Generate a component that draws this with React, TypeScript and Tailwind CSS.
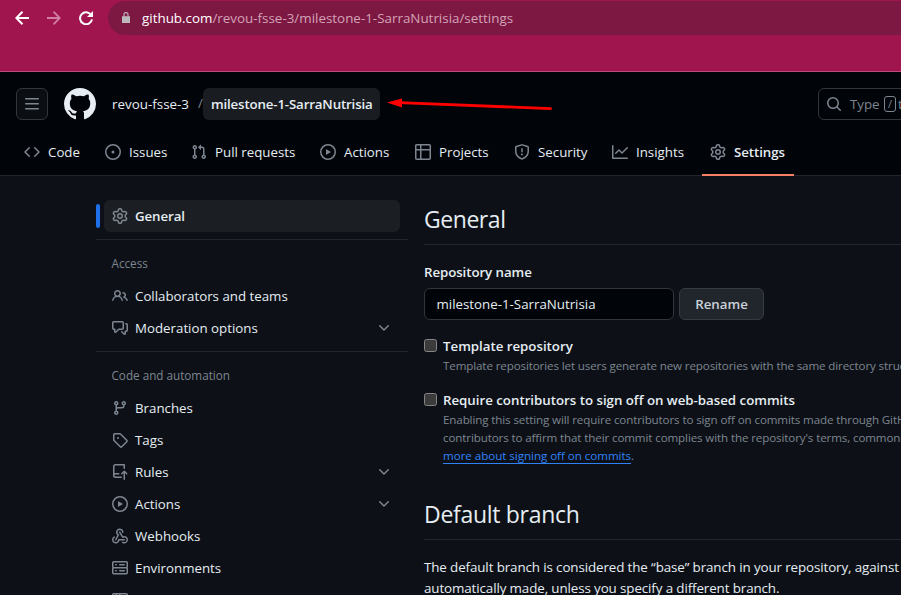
import React from "react";

const paths = {
  bars: "M1 2.75A.75.75 0 0 1 1.75 2h12.5a.75.75 0 0 1 0 1.5H1.75A.75.75 0 0 1 1 2.75Zm0 5A.75.75 0 0 1 1.75 7h12.5a.75.75 0 0 1 0 1.5H1.75A.75.75 0 0 1 1 7.75ZM1.75 12h12.5a.75.75 0 0 1 0 1.5H1.75a.75.75 0 0 1 0-1.5Z",
  github:
    "M8 0c4.42 0 8 3.58 8 8a8.013 8.013 0 0 1-5.45 7.59c-.4.08-.55-.17-.55-.38 0-.27.01-1.13.01-2.2 0-.75-.25-1.23-.54-1.48 1.78-.2 3.65-.88 3.65-3.95 0-.88-.31-1.59-.82-2.15.08-.2.36-1.02-.08-2.12 0 0-.67-.22-2.2.82-.64-.18-1.32-.27-2-.27-.68 0-1.36.09-2 .27-1.53-1.03-2.2-.82-2.2-.82-.44 1.1-.16 1.92-.08 2.12-.51.56-.82 1.28-.82 2.15 0 3.06 1.86 3.75 3.64 3.95-.23.2-.44.55-.51 1.07-.46.21-1.61.55-2.33-.66-.15-.24-.6-.83-1.23-.82-.67.01-.27.38.01.53.34.19.73.9.82 1.13.16.45.68 1.31 2.69.94 0 .67.01 1.3.01 1.49 0 .21-.15.45-.55.38A7.995 7.995 0 0 1 0 8c0-4.42 3.58-8 8-8Z",
  code: "m11.28 3.22 4.25 4.25a.75.75 0 0 1 0 1.06l-4.25 4.25a.749.749 0 0 1-1.275-.326.749.749 0 0 1 .215-.734L13.94 8l-3.72-3.72a.749.749 0 0 1 .326-1.275.749.749 0 0 1 .734.215Zm-6.56 0a.751.751 0 0 1 1.042.018.751.751 0 0 1 .018 1.042L2.06 8l3.72 3.72a.749.749 0 0 1-.326 1.275.749.749 0 0 1-.734-.215L.47 8.53a.75.75 0 0 1 0-1.06Z",
  issue: "M8 9.5a1.5 1.5 0 1 0 0-3 1.5 1.5 0 0 0 0 3Z M8 0a8 8 0 1 1 0 16A8 8 0 0 1 8 0ZM1.5 8a6.5 6.5 0 1 0 13 0 6.5 6.5 0 0 0-13 0Z",
  pull: "M1.5 3.25a2.25 2.25 0 1 1 3 2.122v5.256a2.251 2.251 0 1 1-1.5 0V5.372A2.25 2.25 0 0 1 1.5 3.25Zm5.677-.177L9.573.677A.25.25 0 0 1 10 .854V2.5h1A2.5 2.5 0 0 1 13.5 5v5.628a2.251 2.251 0 1 1-1.5 0V5a1 1 0 0 0-1-1h-1v1.646a.25.25 0 0 1-.427.177L7.177 3.427a.25.25 0 0 1 0-.354ZM3.75 2.5a.75.75 0 1 0 0 1.5.75.75 0 0 0 0-1.5Zm0 9.5a.75.75 0 1 0 0 1.5.75.75 0 0 0 0-1.5Zm8.25.75a.75.75 0 1 0 1.5 0 .75.75 0 0 0-1.5 0Z",
  play: "M8 0a8 8 0 1 1 0 16A8 8 0 0 1 8 0ZM1.5 8a6.5 6.5 0 1 0 13 0 6.5 6.5 0 0 0-13 0Zm4.879-2.773 4.264 2.559a.25.25 0 0 1 0 .428l-4.264 2.559A.25.25 0 0 1 6 10.559V5.442a.25.25 0 0 1 .379-.215Z",
  table:
    "M0 1.75C0 .784.784 0 1.75 0h12.5C15.216 0 16 .784 16 1.75v12.5A1.75 1.75 0 0 1 14.25 16H1.75A1.75 1.75 0 0 1 0 14.25ZM6.5 6.5v8h7.75a.25.25 0 0 0 .25-.25V6.5Zm8-1.5V1.75a.25.25 0 0 0-.25-.25H6.5V5Zm-13 1.5v7.75c0 .138.112.25.25.25H5v-8ZM5 5V1.5H1.75a.25.25 0 0 0-.25.25V5Z",
  shield:
    "M7.467.133a1.748 1.748 0 0 1 1.066 0l5.25 1.68A1.75 1.75 0 0 1 15 3.48V7c0 1.566-.32 3.182-1.303 4.682-.983 1.498-2.585 2.813-5.032 3.855a1.697 1.697 0 0 1-1.33 0c-2.447-1.042-4.049-2.357-5.032-3.855C1.32 10.182 1 8.566 1 7V3.48a1.75 1.75 0 0 1 1.217-1.667Zm.61 1.429a.25.25 0 0 0-.153 0l-5.25 1.68a.25.25 0 0 0-.174.238V7c0 1.358.275 2.666 1.057 3.86.784 1.194 2.121 2.34 4.366 3.297a.196.196 0 0 0 .154 0c2.245-.956 3.582-2.104 4.366-3.298C13.225 9.666 13.5 8.36 13.5 7V3.48a.251.251 0 0 0-.174-.237l-5.25-1.68ZM8.75 4.75v3a.75.75 0 0 1-1.5 0v-3a.75.75 0 0 1 1.5 0ZM9 10.5a1 1 0 1 1-2 0 1 1 0 0 1 2 0Z",
  graph:
    "M1.5 1.75V13.5h13.75a.75.75 0 0 1 0 1.5H.75a.75.75 0 0 1-.75-.75V1.75a.75.75 0 0 1 1.5 0Zm14.28 2.53-5.25 5.25a.75.75 0 0 1-1.06 0L7 7.06 4.28 9.78a.751.751 0 0 1-1.042-.018.751.751 0 0 1-.018-1.042l3.25-3.25a.75.75 0 0 1 1.06 0L10 7.94l4.72-4.72a.751.751 0 0 1 1.042.018.751.751 0 0 1 .018 1.042Z",
  gear: "M8 0a8.2 8.2 0 0 1 .701.031C9.444.095 9.99.645 10.16 1.29l.288 1.107c.018.066.079.158.212.224.231.114.454.243.668.386.123.082.233.09.299.071l1.103-.303c.644-.176 1.392.021 1.82.63.27.385.506.792.704 1.218.315.675.111 1.422-.364 1.891l-.814.806c-.049.048-.098.147-.088.294.016.257.016.515 0 .772-.01.147.038.246.088.294l.814.806c.475.469.679 1.216.364 1.891a7.977 7.977 0 0 1-.704 1.217c-.428.61-1.176.807-1.82.63l-1.102-.302c-.067-.019-.177-.011-.3.071a5.909 5.909 0 0 1-.668.386c-.133.066-.194.158-.211.224l-.29 1.106c-.168.646-.715 1.196-1.458 1.26a8.006 8.006 0 0 1-1.402 0c-.743-.064-1.289-.614-1.458-1.26l-.289-1.106c-.018-.066-.079-.158-.212-.224a5.738 5.738 0 0 1-.668-.386c-.123-.082-.233-.09-.299-.071l-1.103.303c-.644.176-1.392-.021-1.82-.63a8.12 8.12 0 0 1-.704-1.218c-.315-.675-.111-1.422.363-1.891l.815-.806c.05-.048.098-.147.088-.294a6.214 6.214 0 0 1 0-.772c.01-.147-.038-.246-.088-.294l-.815-.806C.635 6.045.431 5.298.746 4.623a7.92 7.92 0 0 1 .704-1.217c.428-.61 1.176-.807 1.82-.63l1.102.302c.067.019.177.011.3-.071.214-.143.437-.272.668-.386.133-.066.194-.158.211-.224l.29-1.106C6.009.645 6.556.095 7.299.03 7.53.01 7.764 0 8 0Zm-.571 1.525c-.036.003-.108.036-.137.146l-.289 1.105c-.147.561-.549.967-.998 1.189-.173.086-.34.183-.5.29-.417.278-.97.423-1.529.27l-1.103-.303c-.109-.03-.175.016-.195.045-.22.312-.412.644-.573.99-.014.031-.021.11.059.19l.815.806c.411.406.562.957.53 1.456a4.709 4.709 0 0 0 0 .582c.032.499-.119 1.05-.53 1.456l-.815.806c-.081.08-.073.159-.059.19.162.346.353.677.573.989.02.03.085.076.195.046l1.102-.303c.56-.153 1.113-.008 1.53.27.161.107.328.204.501.29.447.222.85.629.997 1.189l.289 1.105c.029.109.101.143.137.146a6.6 6.6 0 0 0 1.142 0c.036-.003.108-.036.137-.146l.289-1.105c.147-.561.549-.967.998-1.189.173-.086.34-.183.5-.29.417-.278.97-.423 1.529-.27l1.103.303c.109.029.175-.016.195-.045.22-.313.411-.644.573-.99.014-.031.021-.11-.059-.19l-.815-.806c-.411-.406-.562-.957-.53-1.456a4.709 4.709 0 0 0 0-.582c-.032-.499.119-1.05.53-1.456l.815-.806c.081-.08.073-.159.059-.19a6.464 6.464 0 0 0-.573-.989c-.02-.03-.085-.076-.195-.046l-1.102.303c-.56.153-1.113.008-1.53-.27a4.44 4.44 0 0 0-.501-.29c-.447-.222-.85-.629-.997-1.189l-.289-1.105c-.029-.11-.101-.143-.137-.146a6.6 6.6 0 0 0-1.142 0ZM11 8a3 3 0 1 1-6 0 3 3 0 0 1 6 0ZM9.5 8a1.5 1.5 0 1 0-3.001.001A1.5 1.5 0 0 0 9.5 8Z",
  search:
    "M10.68 11.74a6 6 0 0 1-7.922-8.982 6 6 0 0 1 8.982 7.922l3.04 3.04a.749.749 0 0 1-.326 1.275.749.749 0 0 1-.734-.215ZM11.5 7a4.499 4.499 0 1 0-8.997 0A4.499 4.499 0 0 0 11.5 7Z",
  people:
    "M2 5.5a3.5 3.5 0 1 1 5.898 2.549 5.508 5.508 0 0 1 3.034 4.084.75.75 0 1 1-1.482.235 4 4 0 0 0-7.9 0 .75.75 0 0 1-1.482-.236A5.507 5.507 0 0 1 3.102 8.05 3.493 3.493 0 0 1 2 5.5ZM11 4a3.001 3.001 0 0 1 2.22 5.018 5.01 5.01 0 0 1 2.56 3.012.749.749 0 0 1-.885.954.752.752 0 0 1-.549-.514 3.507 3.507 0 0 0-2.522-2.372.75.75 0 0 1-.574-.73v-.352a.75.75 0 0 1 .416-.672A1.5 1.5 0 0 0 11 5.5.75.75 0 0 1 11 4Zm-5.5-.5a2 2 0 1 0-.001 3.999A2 2 0 0 0 5.5 3.5Z",
  discussion:
    "M1.75 1h8.5c.966 0 1.75.784 1.75 1.75v5.5A1.75 1.75 0 0 1 10.25 10H7.061l-2.574 2.573A1.458 1.458 0 0 1 2 11.543V10h-.25A1.75 1.75 0 0 1 0 8.25v-5.5C0 1.784.784 1 1.75 1ZM1.5 2.75v5.5c0 .138.112.25.25.25h1a.75.75 0 0 1 .75.75v2.19l2.72-2.72a.749.749 0 0 1 .53-.22h3.5a.25.25 0 0 0 .25-.25v-5.5a.25.25 0 0 0-.25-.25h-8.5a.25.25 0 0 0-.25.25Zm13 2a.25.25 0 0 0-.25-.25h-.5a.75.75 0 0 1 0-1.5h.5c.966 0 1.75.784 1.75 1.75v5.5A1.75 1.75 0 0 1 14.25 12H14v1.543a1.458 1.458 0 0 1-2.487 1.03L9.22 12.28a.749.749 0 0 1 .326-1.275.749.749 0 0 1 .734.215l2.22 2.22v-2.19a.75.75 0 0 1 .75-.75h1a.25.25 0 0 0 .25-.25Z",
  branch:
    "M9.5 3.25a2.25 2.25 0 1 1 3 2.122V6A2.5 2.5 0 0 1 10 8.5H6a1 1 0 0 0-1 1v1.128a2.251 2.251 0 1 1-1.5 0V5.372a2.25 2.25 0 1 1 1.5 0v1.836A2.493 2.493 0 0 1 6 7h4a1 1 0 0 0 1-1v-.628A2.25 2.25 0 0 1 9.5 3.25Zm-6 0a.75.75 0 1 0 1.5 0 .75.75 0 0 0-1.5 0Zm8.25-.75a.75.75 0 1 0 0 1.5.75.75 0 0 0 0-1.5ZM4.25 12a.75.75 0 1 0 0 1.5.75.75 0 0 0 0-1.5Z",
  tag: "M1 7.775V2.75C1 1.784 1.784 1 2.75 1h5.025c.464 0 .91.184 1.238.513l6.25 6.25a1.75 1.75 0 0 1 0 2.474l-5.026 5.026a1.75 1.75 0 0 1-2.474 0l-6.25-6.25A1.752 1.752 0 0 1 1 7.775Zm1.5 0c0 .066.026.13.073.177l6.25 6.25a.25.25 0 0 0 .354 0l5.025-5.025a.25.25 0 0 0 0-.354l-6.25-6.25a.25.25 0 0 0-.177-.073H2.75a.25.25 0 0 0-.25.25ZM6 5a1 1 0 1 1 0 2 1 1 0 0 1 0-2Z",
  repoPush:
    "M1 2.5A2.5 2.5 0 0 1 3.5 0h8.75a.75.75 0 0 1 .75.75v3.5a.75.75 0 0 1-1.5 0V1.5h-8a1 1 0 0 0-1 1v6.708A2.493 2.493 0 0 1 3.5 9h3.25a.75.75 0 0 1 0 1.5H3.5a1 1 0 0 0 0 2h5.75a.75.75 0 0 1 0 1.5H3.5A2.5 2.5 0 0 1 1 11.5Zm13.23 7.79-1.23-1.224v6.184a.75.75 0 0 1-1.5 0V9.066L10.28 10.29a.75.75 0 0 1-1.06-1.061l2.505-2.504a.75.75 0 0 1 1.06 0L15.29 9.23a.751.751 0 0 1-.018 1.042.751.751 0 0 1-1.042.018Z",
  webhook:
    "M5.5 4.25a2.25 2.25 0 0 1 4.5 0 .75.75 0 0 0 1.5 0 3.75 3.75 0 1 0-6.14 2.889l-2.272 4.258a.75.75 0 0 0 1.324.706L7 7.25a.75.75 0 0 0-.309-1.015A2.25 2.25 0 0 1 5.5 4.25Z M7.364 3.607a.75.75 0 0 1 1.03.257l2.608 4.349a3.75 3.75 0 1 1-.628 6.785.75.75 0 0 1 .752-1.299 2.25 2.25 0 1 0-.033-3.88.75.75 0 0 1-1.03-.256L7.107 4.636a.75.75 0 0 1 .257-1.03Z M2.9 8.776A.75.75 0 0 1 2.625 9.8 2.25 2.25 0 1 0 6 11.75a.75.75 0 0 1 .75-.751h5.5a.75.75 0 0 1 0 1.5H7.425a3.751 3.751 0 1 1-5.55-3.998.75.75 0 0 1 1.024.274Z",
  server:
    "M1.75 1h12.5c.966 0 1.75.784 1.75 1.75v4c0 .372-.116.717-.314 1 .198.283.314.628.314 1v4a1.75 1.75 0 0 1-1.75 1.75H1.75A1.75 1.75 0 0 1 0 12.75v-4c0-.358.109-.707.314-1a1.739 1.739 0 0 1-.314-1v-4C0 1.784.784 1 1.75 1ZM1.5 2.75v4c0 .138.112.25.25.25h12.5a.25.25 0 0 0 .25-.25v-4a.25.25 0 0 0-.25-.25H1.75a.25.25 0 0 0-.25.25Zm.25 5.75a.25.25 0 0 0-.25.25v4c0 .138.112.25.25.25h12.5a.25.25 0 0 0 .25-.25v-4a.25.25 0 0 0-.25-.25ZM7 4.75A.75.75 0 0 1 7.75 4h4.5a.75.75 0 0 1 0 1.5h-4.5A.75.75 0 0 1 7 4.75ZM7.75 10h4.5a.75.75 0 0 1 0 1.5h-4.5a.75.75 0 0 1 0-1.5ZM3 4.75A.75.75 0 0 1 3.75 4h.5a.75.75 0 0 1 0 1.5h-.5A.75.75 0 0 1 3 4.75ZM3.75 10h.5a.75.75 0 0 1 0 1.5h-.5a.75.75 0 0 1 0-1.5Z",
  codespaces:
    "M0 2.75C0 1.784.784 1 1.75 1h12.5c.966 0 1.75.784 1.75 1.75v10.5A1.75 1.75 0 0 1 14.25 15H1.75A1.75 1.75 0 0 1 0 13.25ZM14.5 6h-13v7.25c0 .138.112.25.25.25h12.5a.25.25 0 0 0 .25-.25Zm-6-3.5v2h6V2.75a.25.25 0 0 0-.25-.25ZM5 2.5v2h2v-2Zm-3.25 0a.25.25 0 0 0-.25.25V4.5h2v-2Z",
  chevron:
    "M12.78 5.22a.749.749 0 0 1 0 1.06l-4.25 4.25a.749.749 0 0 1-1.06 0L3.22 6.28a.749.749 0 1 1 1.06-1.06L8 8.939l3.72-3.719a.749.749 0 0 1 1.06 0Z",
};

type IconName = keyof typeof paths;

function Icon({ name, className = "size-4 text-[#7d8590]" }: { name: IconName; className?: string }) {
  return (
    <svg viewBox="0 0 16 16" fill="currentColor" className={`shrink-0 ${className}`}>
      <path d={paths[name]} />
    </svg>
  );
}

function BrowserBar() {
  return (
    <div className="h-[72px] border-b border-[#bb4b7c] bg-[#a1154f]">
      <div className="flex h-[35px] items-center pl-[15px]">
        <svg viewBox="0 0 14 14" className="size-[14px]" fill="none" stroke="#fff" strokeWidth="2">
          <path d="M14 7H1.5M7.5 .7 1.3 7l6.2 6.3" />
        </svg>
        <svg viewBox="0 0 14 14" className="ml-[18px] size-[14px]" fill="none" stroke="#cf7fa1" strokeWidth="1.8">
          <path d="M0 7h12.5M6.5 .7 12.7 7l-6.2 6.3" />
        </svg>
        <svg viewBox="0 0 14 14" className="ml-[18px] size-[14px]" fill="none" stroke="#fff" strokeWidth="2">
          <path d="M12.1 4A6 6 0 1 0 13 8.3" />
          <path d="M14 0v6H8z" fill="#fff" stroke="none" />
        </svg>
        <div className="ml-[15px] flex h-[34px] flex-1 items-center rounded-l-full bg-[#7d1843] pl-3.5">
          <svg viewBox="0 0 8 11" className="h-[11px] w-2" fill="#bcb8bc">
            <path d="M0 4.2h8V11H0z" />
            <path d="M2 4.5V2.6a2 2 0 0 1 4 0v1.9" fill="none" stroke="#bcb8bc" strokeWidth="1.1" />
          </svg>
          <span className="ml-3 mt-0.5 text-[13.4px] text-[#d3a3b7]">
            <span className="text-white">github.com</span>/revou-fsse-3/milestone-1-SarraNutrisia/settings
          </span>
        </div>
      </div>
    </div>
  );
}

const tabs: { label: string; icon: IconName; width: string }[] = [
  { label: "Code", icon: "code", width: "w-[81px]" },
  { label: "Issues", icon: "issue", width: "w-[86px]" },
  { label: "Pull requests", icon: "pull", width: "w-[129px]" },
  { label: "Actions", icon: "play", width: "w-[95px]" },
  { label: "Projects", icon: "table", width: "w-[99px]" },
  { label: "Security", icon: "shield", width: "w-[98px]" },
  { label: "Insights", icon: "graph", width: "w-[98px]" },
  { label: "Settings", icon: "gear", width: "w-[92px]" },
];

function Header() {
  return (
    <header className="h-[104px] border-b border-[#21262d] bg-[#010409] pt-4">
      <div className="flex h-8 items-center pl-4">
        <div className="flex size-8 shrink-0 items-center justify-center rounded-md border border-[#30363d] bg-[#0b0f14]">
          <Icon name="bars" />
        </div>
        <Icon name="github" className="ml-4 size-8 text-[#e6edf3]" />
        <span className="ml-4 w-[86px] shrink-0 text-[13.4px]">revou-fsse-3</span>
        <span className="w-[5px] shrink-0 text-[#7d8590]">/</span>
        <span className="flex h-8 w-[177px] shrink-0 items-center rounded-md bg-[#191c21] pl-2 pt-px text-[13.3px] font-semibold tracking-[-0.16px]">
          milestone-1-SarraNutrisia
        </span>
        <div className="ml-[438px] flex h-8 w-[300px] shrink-0 items-center rounded-md border border-[#30363d] pl-[7px] text-[#7d8590]">
          <Icon name="search" />
          <span className="ml-2 mt-px w-[34px]">Type</span>
          <span className="flex h-4 w-3 items-center justify-center rounded-[3px] border border-[#7d8590] text-[11px]">/</span>
          <span className="ml-0.5 mt-px">to search</span>
        </div>
      </div>
      <nav className="flex h-14 items-stretch pl-4">
        {tabs.map((t) => (
          <div
            key={t.label}
            className={`flex items-center gap-2 pl-2 ${t.width} ${t.label === "Settings" ? "border-b-2 border-[#f78166] pt-[10px] font-semibold tracking-[-0.08px]" : "pt-2"}`}
          >
            <Icon name={t.icon} />
            <span className="mt-0.5 text-[13.3px]">{t.label}</span>
          </div>
        ))}
      </nav>
    </header>
  );
}

function NavItem({ icon, label, expand }: { icon: IconName; label: string; expand?: boolean }) {
  return (
    <div className="flex h-8 items-center pl-4 pr-4">
      <Icon name={icon} />
      <span className="ml-[7px] mt-0.5 flex-1">{label}</span>
      {expand && <Icon name="chevron" />}
    </div>
  );
}

function Group({ title, children }: { title: string; children: React.ReactNode }) {
  return (
    <section className="mt-[7px] border-t border-[#21262d]">
      <h3 className="flex h-10 items-center pl-[15.5px] pt-2 text-[11.7px] text-[#7d8590]">{title}</h3>
      {children}
    </section>
  );
}

function Sidebar() {
  return (
    <aside className="ml-24 w-[312px] shrink-0 pt-6">
      <div className="flex items-center">
        <div className="h-6 w-1 rounded-md bg-[#1f6feb]" />
        <div className="ml-1 flex h-8 w-[296px] items-center rounded-md bg-[#1b1f23] pl-2 font-semibold">
          <Icon name="gear" />
          <span className="ml-[7px] mt-0.5 tracking-[-0.1px]">General</span>
        </div>
      </div>
      <Group title="Access">
        <NavItem icon="people" label="Collaborators and teams" />
        <NavItem icon="discussion" label="Moderation options" expand />
      </Group>
      <Group title="Code and automation">
        <NavItem icon="branch" label="Branches" />
        <NavItem icon="tag" label="Tags" />
        <NavItem icon="repoPush" label="Rules" expand />
        <NavItem icon="play" label="Actions" expand />
        <NavItem icon="webhook" label="Webhooks" />
        <NavItem icon="server" label="Environments" />
        <NavItem icon="codespaces" label="Codespaces" />
      </Group>
    </aside>
  );
}

function Option({ title, children }: { title: string; children: React.ReactNode }) {
  return (
    <div className="flex">
      <span className="mt-[3px] size-[13px] shrink-0 rounded-[2.5px] border border-[#858585] bg-[#3b3b3b]" />
      <div className="ml-1.5">
        <div className="h-[21px] font-semibold leading-[21px] tracking-[-0.02px]">{title}</div>
        <div className="text-[11.6px] leading-[18px] tracking-[-0.12px] text-[#7d8590]">{children}</div>
      </div>
    </div>
  );
}

function Content() {
  return (
    <main className="ml-4 flex-1 whitespace-nowrap">
      <h2 className="h-[69px] border-b border-[#21262d] pt-[27px] text-[23px] leading-8 tracking-[-0.45px]">General</h2>
      <div className="mt-[17px] h-[26px] font-semibold leading-5 tracking-[-0.08px]">Repository name</div>
      <div className="flex">
        <div className="flex h-8 w-[250px] items-center rounded-md border border-[#30363d] bg-[#010409] pl-[11.5px] pt-0.5">
          milestone-1-SarraNutrisia
        </div>
        <div className="ml-[5px] flex h-8 w-[85px] items-center justify-center rounded-md border border-[#363b42] bg-[#21262d] pt-0.5 font-semibold text-[#c9d1d9]">
          Rename
        </div>
      </div>
      <div className="mt-4 flex flex-col gap-[15px]">
        <Option title="Template repository">
          Template repositories let users generate new repositories with the same directory structure and files.
        </Option>
        <Option title="Require contributors to sign off on web-based commits">
          Enabling this setting will require contributors to sign off on commits made through GitHub’s web interface.
          <br />
          contributors to affirm that their commit complies with the repository's terms, commonly the Developer
          <br />
          <span className="tracking-[-0.04px] text-[#2f81f7] underline underline-offset-[3px]">more about signing off on commits</span>.
        </Option>
      </div>
      <h2 className="mt-[33px] h-[42px] border-b border-[#21262d] text-[23px] leading-8 tracking-[-0.3px]">Default branch</h2>
      <p className="mt-[17px] text-[13.4px] leading-[21px] tracking-[-0.12px]">
        The default branch is considered the “base” branch in your repository, against which all pull requests
        <br />
        automatically made, unless you specify a different branch.
      </p>
    </main>
  );
}

export default function App() {
  return (
    <div className="relative h-[595px] w-[901px] overflow-hidden whitespace-nowrap bg-[#0d1117] font-['Open_Sans',sans-serif] text-[13.3px] text-[#e6edf3]">
      <BrowserBar />
      <Header />
      <div className="flex">
        <Sidebar />
        <Content />
      </div>
      <svg viewBox="0 0 166 20" className="absolute left-[387px] top-[93px] h-5 w-[166px]">
        <path d="M12 9.7 163.5 15.6" stroke="#f00" strokeWidth="2.8" strokeLinecap="round" />
        <path d="M0 9.5 15 5.4v9z" fill="#f00" />
      </svg>
    </div>
  );
}
